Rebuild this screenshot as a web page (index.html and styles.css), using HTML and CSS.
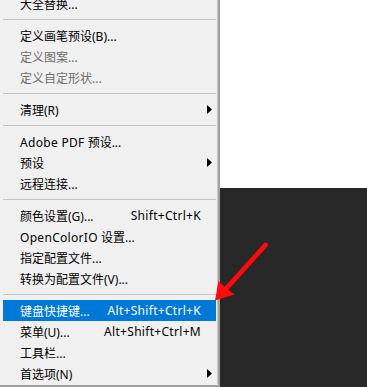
FILE: index.html
```html
<!DOCTYPE html>
<html lang="zh-CN">
<head>
<meta charset="utf-8">
<title>Menu</title>
<link rel="stylesheet" href="styles.css">
</head>
<body>
<div class="screen">
  <div class="menu-frame">
    <div class="menu">
      <div class="item"><span class="label">大全替换...</span><span class="sub"></span></div>
      <div class="sep"></div>
      <div class="item"><span class="label">定义画笔预设(B)...</span><span class="sub"></span></div>
      <div class="item disabled"><span class="label">定义图案...</span><span class="sub"></span></div>
      <div class="item disabled"><span class="label">定义自定形状...</span><span class="sub"></span></div>
      <div class="sep"></div>
      <div class="item"><span class="label">清理(R)</span><span class="sub has"><svg width="5" height="9" viewBox="0 0 5 9"><polygon points="0,0 5,4.5 0,9" fill="#000"/></svg></span></div>
      <div class="sep"></div>
      <div class="item"><span class="label"><span class="lat">Adobe PDF</span> 预设...</span><span class="sub"></span></div>
      <div class="item"><span class="label">预设</span><span class="sub has"><svg width="5" height="9" viewBox="0 0 5 9"><polygon points="0,0 5,4.5 0,9" fill="#000"/></svg></span></div>
      <div class="item"><span class="label">远程连接...</span><span class="sub"></span></div>
      <div class="sep"></div>
      <div class="item"><span class="label">颜色设置(G)...</span><span class="key">Shift+Ctrl+K</span><span class="sub"></span></div>
      <div class="item"><span class="label"><span class="lat">OpenColorIO</span> 设置...</span><span class="sub"></span></div>
      <div class="item"><span class="label">指定配置文件...</span><span class="sub"></span></div>
      <div class="item"><span class="label">转换为配置文件(V)...</span><span class="sub"></span></div>
      <div class="sep"></div>
      <div class="item active"><span class="label">键盘快捷键...</span><span class="key">Alt+Shift+Ctrl+K</span><span class="sub"></span></div>
      <div class="item"><span class="label">菜单(U)...</span><span class="key">Alt+Shift+Ctrl+M</span><span class="sub"></span></div>
      <div class="item"><span class="label">工具栏...</span><span class="sub"></span></div>
      <div class="item"><span class="label">首选项(N)</span><span class="sub has"><svg width="5" height="9" viewBox="0 0 5 9"><polygon points="0,0 5,4.5 0,9" fill="#000"/></svg></span></div>
    </div>
  </div>
  <div class="side">
    <div class="side-top"></div>
    <div class="side-dark"></div>
  </div>
  <svg class="pointer" width="367" height="387" viewBox="0 0 367 387">
    <line x1="265.5" y1="245" x2="224" y2="291" stroke="#ff0a0a" stroke-width="4.8" stroke-linecap="round"/>
    <polygon points="215,300.5 218.5,281 226,288 234.5,294.5" fill="#ff0a0a"/>
  </svg>
</div>
</body>
</html>
```
FILE: styles.css
```css
html, body {
  margin: 0;
  padding: 0;
  background: #282828;
}
.screen {
  position: relative;
  width: 367px;
  height: 387px;
  overflow: hidden;
  display: flex;
  align-items: stretch;
  font-family: "Noto Sans", "Noto Sans CJK SC", sans-serif;
  font-size: 12px;
  color: #000;
}
.menu-frame {
  width: 218px;
  flex: none;
  border-right: 2px solid #a0a0a0;
  border-bottom: 2px solid #a0a0a0;
  margin-top: -7px;
  background: #f0f0f0;
}
.menu {
  border-right: 1px solid #c8c8c8;
  padding: 0 1px 0 3px;
  background: #f0f0f0;
}
.item {
  height: 21px;
  display: flex;
  align-items: center;
  padding: 0 4px 0 17px;
  white-space: nowrap;
}
.item .label {
  flex: 1;
}
.item .lat {
  letter-spacing: 0.3px;
}
.item .key {
  margin-right: 6px;
  letter-spacing: 0.3px;
}
.item .sub {
  width: 5px;
  height: 9px;
  display: flex;
}
.item.disabled {
  color: #6d6d6d;
}
.item.active {
  background: #0078d7;
  color: #fff;
}
.sep {
  height: 11px;
  display: flex;
  align-items: center;
}
.sep::before {
  content: "";
  display: block;
  width: 100%;
  height: 1px;
  background: #c4c4c4;
}
.side {
  flex: 1;
  display: flex;
  flex-direction: column;
}
.side-top {
  height: 188px;
  background: #ffffff;
}
.side-dark {
  flex: 1;
  background: #282828;
}
.pointer {
  position: absolute;
  left: 0;
  top: 0;
  pointer-events: none;
}
```
